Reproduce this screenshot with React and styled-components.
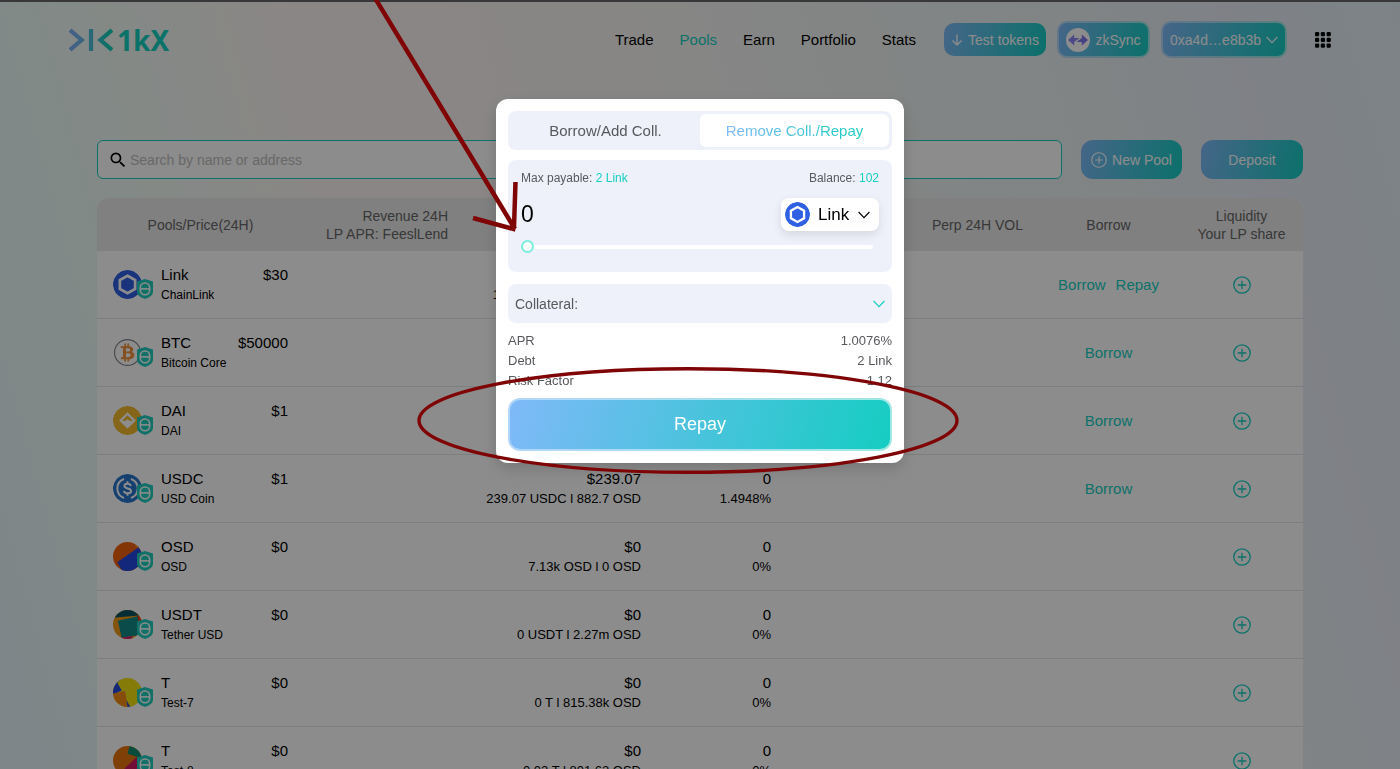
import React, { useState } from 'react';
import styled, { createGlobalStyle, css } from 'styled-components';
import { MdSearch } from 'react-icons/md';
import { FaBtc } from 'react-icons/fa';

const teal = '#15cfc2';
const brand = '#7fb9f8, #15cdc2';
const brandPale = '#b3d6fb, #9fe9e3';

const GlobalStyle = createGlobalStyle`
  *, *::before, *::after { box-sizing: border-box; }
  body {
    margin: 0;
    overflow: hidden;
    font-family: 'Liberation Sans', Arial, Helvetica, sans-serif;
    font-size: 14px;
    color: #000;
  }
  button, input, select { font: inherit; color: inherit; }
  button { border: 0; padding: 0; background: none; cursor: pointer; }
  a { color: inherit; text-decoration: none; }
`;

const Page = styled.div`
  min-height: 100vh;
  border-top: 2px solid #66666c;
  background: linear-gradient(
    75deg,
    #e6f3f9 0%,
    #ebfbf6 14%,
    #fbf5f2 31%,
    #f7f5f3 50%,
    #eef2f2 66%,
    #eaf1f1 78%,
    #e7ecf5 89%,
    #e2eef5 100%
  );
`;

const Header = styled.header`
  display: flex;
  align-items: center;
  justify-content: space-between;
  height: 75px;
  padding: 0 69px;
`;

const Logo = styled.a`
  display: flex;
  align-items: center;
  gap: 4px;
  font-family: 'Noto Sans', sans-serif;
  font-size: 28px;
  font-weight: 700;
  line-height: 28px;
  color: ${teal};
`;

const HeaderSide = styled.div`
  display: flex;
  align-items: center;
  gap: 28px;
`;

const Nav = styled.nav`
  display: flex;
  gap: 26px;
  font-size: 15px;
  line-height: 20px;
`;

const NavLink = styled.a`
  color: ${(p) => (p.$active ? teal : '#000')};
`;

const HeaderActions = styled.div`
  display: flex;
  align-items: center;
  gap: 11px;
`;

const GradientButton = styled.button`
  display: inline-flex;
  align-items: center;
  justify-content: center;
  gap: 5px;
  width: ${(p) => p.$width};
  height: ${(p) => p.$height};
  border-radius: ${(p) => p.$radius || '10px'};
  background: linear-gradient(105deg, ${brand});
  color: #fff;
  font-size: ${(p) => p.$size || '14px'};
  white-space: nowrap;
  ${(p) =>
    p.$ring &&
    css`
      border: 2px solid transparent;
      background: linear-gradient(105deg, ${brand}) padding-box,
        linear-gradient(105deg, ${brandPale}) border-box;
    `}
`;

const AppsButton = styled.button`
  display: flex;
`;

const Main = styled.main`
  padding: 63px 97px 0;
`;

const Toolbar = styled.div`
  display: flex;
  gap: 19px;
`;

const SearchBox = styled.label`
  flex: 1;
  display: flex;
  align-items: center;
  height: 39px;
  padding: 0 10px;
  border: 1px solid ${teal};
  border-radius: 6px;
  background: #fff;
`;

const SearchInput = styled.input`
  flex: 1;
  border: 0;
  outline: 0;
  background: none;
  &::placeholder { color: #bdbdbd; opacity: 1; }
`;

const PoolTable = styled.table`
  width: 100%;
  margin-top: 19px;
  table-layout: fixed;
  border-collapse: separate;
  border-spacing: 0;
  border-radius: 12px 12px 0 0;
  overflow: hidden;
  background: #fff;
`;

const HeadCell = styled.th`
  height: 53px;
  padding: 0 14px;
  background: #e9e9e9;
  color: #666;
  font-weight: 400;
  line-height: 18px;
  white-space: nowrap;
  text-align: ${(p) => p.$align || 'center'};
  &:nth-child(2) { padding-right: 16px; }
`;

const Cell = styled.td`
  height: 68px;
  padding: 0 16px;
  border-bottom: 1px solid #e6e6ea;
  text-align: ${(p) => p.$align || 'center'};
`;

const PoolInfo = styled.div`
  display: flex;
  align-items: center;
  gap: 8px;
`;

const TokenMark = styled.span`
  position: relative;
  display: flex;
  width: 40px;
`;

const ShieldBadge = styled.svg`
  position: absolute;
  right: 0;
  bottom: 0;
`;

const PoolName = styled.div`
  flex: 1;
  text-align: left;
`;

const Primary = styled.div`
  font-size: 15px;
  line-height: 20px;
`;

const Secondary = styled.div`
  min-height: 20px;
  font-size: ${(p) => (p.$small ? '12px' : '13px')};
  line-height: 20px;
  white-space: nowrap;
`;

const Price = styled(Primary)`
  align-self: flex-start;
`;

const CellActions = styled.div`
  display: flex;
  justify-content: center;
  gap: 10px;
`;

const TextButton = styled.button`
  color: ${teal};
  font-size: 15px;
  line-height: 20px;
`;

const AddButton = styled.button`
  display: inline-flex;
  vertical-align: middle;
  color: ${teal};
`;

const Mask = styled.div`
  position: fixed;
  inset: 0;
  display: flex;
  justify-content: center;
  align-items: flex-start;
  padding-top: 99px;
  background: rgba(0, 0, 0, 0.45);
`;

const Modal = styled.section`
  width: 408px;
  padding: 12px;
  border-radius: 12px;
  background: #fff;
  color: #58595d;
  box-shadow: 0 6px 16px rgba(0, 0, 0, 0.16);
`;

const Tabs = styled.div`
  display: flex;
  height: 39px;
  padding: 3px;
  border-radius: 8px;
  background: #eff1fa;
`;

const Tab = styled.button`
  flex: 1;
  border-radius: 6px;
  font-size: 15px;
  background: ${(p) => (p.$selected ? '#fff' : 'none')};
`;

const TabLabel = styled.span`
  ${(p) =>
    p.$selected &&
    css`
      background: linear-gradient(90deg, ${brand});
      background-clip: text;
      color: transparent;
    `}
`;

const AmountPanel = styled.div`
  margin-top: 10px;
  padding: 10px 13px 19px;
  border-radius: 8px;
  background: #eff1fa;
`;

const Between = styled.div`
  display: flex;
  align-items: center;
  justify-content: space-between;
`;

const Limits = styled(Between)`
  font-size: 12px;
  line-height: 16px;
`;

const Accent = styled.span`
  color: ${teal};
`;

const AmountRow = styled(Between)`
  margin-top: 12px;
  color: #000;
`;

const AmountInput = styled.input`
  width: 160px;
  padding: 0;
  border: 0;
  outline: 0;
  background: none;
  font-size: 23px;
`;

const TokenPicker = styled.label`
  display: flex;
  align-items: center;
  gap: 8px;
  height: 33px;
  padding: 0 9px 0 4px;
  border-radius: 8px;
  background: #fff;
  box-shadow: 0 4px 10px rgba(0, 0, 0, 0.1);
`;

const TokenSelect = styled.select`
  appearance: none;
  padding: 0;
  border: 0;
  outline: 0;
  background: none;
  font-size: 17px;
`;

const Slider = styled.input`
  display: block;
  appearance: none;
  width: calc(100% - 6px);
  height: 13px;
  margin: 9px 0 0;
  background: none;
  &::-webkit-slider-runnable-track {
    height: 4px;
    border-radius: 2px;
    background: #fff;
  }
  &::-webkit-slider-thumb {
    appearance: none;
    width: 13px;
    height: 13px;
    margin-top: -5px;
    border: 2px solid #79eedd;
    border-radius: 50%;
    background: #fff;
  }
`;

const CollateralButton = styled.button`
  display: flex;
  align-items: center;
  justify-content: space-between;
  width: 100%;
  height: 39px;
  margin-top: 12px;
  padding: 0 7px;
  border-radius: 8px;
  background: #eff1fa;
`;

const Summary = styled.dl`
  margin: 8px 0 7px;
  font-size: 13px;
  line-height: 20px;
`;

const SummaryValue = styled.dd`
  margin: 0;
`;

const Annotations = styled.svg`
  position: fixed;
  top: 0;
  left: calc(50% - 700px);
  pointer-events: none;
`;

const Chevron = ({ color = 'currentColor' }) => (
  <svg width="12" height="12" viewBox="0 0 12 12" fill="none" stroke={color} strokeWidth="1.2" aria-hidden="true">
    <path d="M.6 3 6 8.6 11.4 3" />
  </svg>
);

const PlusCircle = ({ size }) => (
  <svg width={size} height={size} viewBox="0 0 18 18" fill="none" stroke="currentColor" strokeWidth="1.3" aria-hidden="true">
    <circle cx="9" cy="9" r="8.2" />
    <path d="M9 4.7v8.6M4.7 9h8.6" />
  </svg>
);

const ArrowDown = () => (
  <svg width="12" height="14" viewBox="0 0 12 14" fill="none" stroke="currentColor" strokeWidth="1.3" aria-hidden="true">
    <path d="M6 1.5v10.5M1.5 7.5 6 12l4.5-4.5" />
  </svg>
);

const LogoMark = () => (
  <svg width="44" height="24" viewBox="0 0 44 24" fill="none" stroke="url(#logo-fill)" strokeWidth="4.2" aria-hidden="true">
    <defs>
      <linearGradient id="logo-fill" gradientUnits="userSpaceOnUse" x1="0" y1="0" x2="44" y2="0">
        <stop offset="0.1" stopColor="#7fb0f5" />
        <stop offset="0.9" stopColor="#15cdb8" />
      </linearGradient>
    </defs>
    <path d="M1 2 12.6 12 1 22M43 2 31.4 12 43 22" />
    <path d="M19.9 1h4.2v22h-4.2z" fill="url(#logo-fill)" stroke="none" />
  </svg>
);

const ZkSyncMark = () => (
  <svg width="24" height="24" viewBox="0 0 24 24" aria-hidden="true">
    <circle cx="12" cy="12" r="12" fill="#fff" />
    <path d="M2 12 8.2 6.4V10h5.3L8.2 13.9v3.6z" fill="#8a86f0" />
    <path d="M22 12 15.8 6.4V10L10.5 14h5.3v3.5z" fill="#8078ec" />
  </svg>
);

const AppsIcon = () => (
  <svg width="16" height="16" viewBox="0 0 16 16" aria-hidden="true">
    {[0, 5.8, 11.6].map((y) =>
      [0, 5.8, 11.6].map((x) => <rect key={`${x}-${y}`} x={x} y={y} width="4.2" height="4.2" rx="1.2" />)
    )}
  </svg>
);

const tokenArt = {
  link: (
    <>
      <circle cx="15" cy="15" r="15" fill="#2f5fe3" />
      <path d="M15 6 22.900 10.500v9L15 24 7.100 19.500v-9z" fill="none" stroke="#fff" strokeWidth="2.800" />
    </>
  ),
  btc: (
    <>
      <circle cx="15" cy="15" r="13.4" fill="#fff" stroke="#85858d" strokeWidth="1.2" />
      <FaBtc x="5.5" y="5.5" size={19} color="#f0903c" />
    </>
  ),
  dai: (
    <>
      <circle cx="15" cy="15" r="15" fill="#f2b92b" />
      <path fillRule="evenodd" d="M15 6.500 23.700 15 15 23.600 6.300 15zM15 9.500 9.300 15.200H13L15 13.600 17 15.200h3.700z" fill="#fff" />
    </>
  ),
  usdc: (
    <>
      <circle cx="15" cy="15" r="15" fill="#2775ca" />
      <path
        d="M11.4 5.2a10.4 10.4 0 0 0 0 19.6M18.6 5.2a10.4 10.4 0 0 1 0 19.6M18.5 12.4c-.4-1.6-1.6-2.3-3.4-2.3-2 0-3.3.9-3.3 2.4 0 3.5 6.9 1.5 6.9 5 0 1.6-1.5 2.5-3.6 2.5-2.1 0-3.5-.8-3.8-2.5M15 7.6V10m0 10v2.5"
        fill="none"
        stroke="#fff"
        strokeWidth="2"
      />
    </>
  ),
  osd: (
    <>
      <rect width="30" height="30" fill="#f0620c" />
      <path d="M4.5 21 26.5 5.5 36 20 24 34H12z" fill="#2347e0" />
      <path d="M22 3 27 5l-1.5 1z" fill="#f6a31e" />
    </>
  ),
  usdt: (
    <>
      <rect width="30" height="30" fill="#f39a16" />
      <path d="M0 0h30v5.5L0 8z" fill="#0e5464" />
      <path d="M24 6h6v12h-6z" fill="#f5390c" />
      <path d="M5 11 26 6.5V26l-17 3z" fill="#128a86" />
      <path d="M9 28.5 20 27v3H9z" fill="#d8246c" />
    </>
  ),
  t7: (
    <>
      <rect width="30" height="30" fill="#f1e012" />
      <path d="M0 0h9L4.5 5 9 13 0 17z" fill="#2347e0" />
      <path d="M0 16 12.5 13.5 15.5 31H0z" fill="#f28c12" />
      <path d="M14 23 18 30h-3z" fill="#2347e0" />
    </>
  ),
  t8: (
    <>
      <rect width="30" height="30" fill="#e8760e" />
      <path d="M17 0 30 4v9L15 8z" fill="#128a70" />
      <path d="M12 23 24 12 30 13v17H12z" fill="#d01a62" />
      <path d="M10 24h20v6H10z" fill="#24407c" />
    </>
  ),
};

const TokenIcon = ({ id, size = 29 }) => (
  <svg width={size} height={size} viewBox="0 0 30 30" aria-hidden="true">
    <defs>
      <clipPath id={`round-${id}-${size}`}>
        <circle cx="15" cy="15" r="15" />
      </clipPath>
    </defs>
    <g clipPath={`url(#round-${id}-${size})`}>{tokenArt[id]}</g>
  </svg>
);

const Shield = () => (
  <ShieldBadge width="16" height="20" viewBox="0 0 16 20" aria-hidden="true">
    <path d="M8 0 16 2.5V12.500C16 16 12.800 18.400 8 20 3.200 18.400 0 16 0 12.500V2.500z" fill="#1fcdbd" />
    <rect x="3.300" y="4" width="9.400" height="11.800" rx="4.700" fill="none" stroke="#fff" strokeWidth="1.600" />
    <path d="M3.500 9.900h9" stroke="#fff" strokeWidth="1.600" />
  </ShieldBadge>
);

const pools = [
  { id: 'link', symbol: 'Link', name: 'ChainLink', price: '$30', tvl: '', split: '102.45 Link l 30.38k OSD', vol: '', rate: '', actions: ['Borrow', 'Repay'] },
  { id: 'btc', symbol: 'BTC', name: 'Bitcoin Core', price: '$50000', tvl: '', split: '', vol: '', rate: '', actions: ['Borrow'] },
  { id: 'dai', symbol: 'DAI', name: 'DAI', price: '$1', tvl: '', split: '', vol: '', rate: '', actions: ['Borrow'] },
  { id: 'usdc', symbol: 'USDC', name: 'USD Coin', price: '$1', tvl: '$239.07', split: '239.07 USDC l 882.7 OSD', vol: '0', rate: '1.4948%', actions: ['Borrow'] },
  { id: 'osd', symbol: 'OSD', name: 'OSD', price: '$0', tvl: '$0', split: '7.13k OSD l 0 OSD', vol: '0', rate: '0%', actions: [] },
  { id: 'usdt', symbol: 'USDT', name: 'Tether USD', price: '$0', tvl: '$0', split: '0 USDT l 2.27m OSD', vol: '0', rate: '0%', actions: [] },
  { id: 't7', symbol: 'T', name: 'Test-7', price: '$0', tvl: '$0', split: '0 T l 815.38k OSD', vol: '0', rate: '0%', actions: [] },
  { id: 't8', symbol: 'T', name: 'Test-8', price: '$0', tvl: '$0', split: '0.02 T l 801.62 OSD', vol: '0', rate: '0%', actions: [] },
];

const columnWidths = [207, 160, 193, 130, 131, 119, 143, 123];

const PoolRow = ({ pool }) => (
  <tr>
    <Cell>
      <PoolInfo>
        <TokenMark>
          <TokenIcon id={pool.id} />
          <Shield />
        </TokenMark>
        <PoolName>
          <Primary>{pool.symbol}</Primary>
          <Secondary $small>{pool.name}</Secondary>
        </PoolName>
        <Price>{pool.price}</Price>
      </PoolInfo>
    </Cell>
    <Cell />
    <Cell $align="right">
      <Primary>{pool.tvl || '\u00a0'}</Primary>
      <Secondary>{pool.split}</Secondary>
    </Cell>
    <Cell $align="right">
      <Primary>{pool.vol || '\u00a0'}</Primary>
      <Secondary>{pool.rate}</Secondary>
    </Cell>
    <Cell />
    <Cell />
    <Cell>
      <CellActions>
        {pool.actions.map((action) => (
          <TextButton key={action} type="button">{action}</TextButton>
        ))}
      </CellActions>
    </Cell>
    <Cell>
      <AddButton type="button" aria-label={`Add liquidity to ${pool.symbol}`}>
        <PlusCircle size={18} />
      </AddButton>
    </Cell>
  </tr>
);

const RepayModal = () => {
  const [amount, setAmount] = useState('0');
  const update = (e) => setAmount(e.target.value);
  return (
    <Mask>
      <Modal role="dialog" aria-modal="true" aria-label="Repay">
        <Tabs role="tablist">
          <Tab type="button" role="tab" aria-selected="false">
            <TabLabel>Borrow/Add Coll.</TabLabel>
          </Tab>
          <Tab type="button" role="tab" aria-selected="true" $selected>
            <TabLabel $selected>Remove Coll./Repay</TabLabel>
          </Tab>
        </Tabs>
        <AmountPanel>
          <Limits>
            <span>Max payable: <Accent>2 Link</Accent></span>
            <span>Balance: <Accent>102</Accent></span>
          </Limits>
          <AmountRow>
            <AmountInput aria-label="Amount" value={amount} onChange={update} />
            <TokenPicker>
              <TokenIcon id="link" size={25} />
              <TokenSelect aria-label="Token" defaultValue="Link">
                <option>Link</option>
              </TokenSelect>
              <Chevron />
            </TokenPicker>
          </AmountRow>
          <Slider type="range" aria-label="Amount slider" min="0" max="2" step="0.01" value={Number(amount) || 0} onChange={update} />
        </AmountPanel>
        <CollateralButton type="button">
          Collateral:
          <Chevron color={teal} />
        </CollateralButton>
        <Summary>
          <Between><dt>APR</dt><SummaryValue>1.0076%</SummaryValue></Between>
          <Between><dt>Debt</dt><SummaryValue>2 Link</SummaryValue></Between>
          <Between><dt>Risk Factor</dt><SummaryValue>1.12</SummaryValue></Between>
        </Summary>
        <GradientButton type="button" $ring $width="100%" $height="53px" $radius="12px" $size="18px">
          Repay
        </GradientButton>
      </Modal>
    </Mask>
  );
};

export default function App() {
  return (
    <>
      <GlobalStyle />
      <Page>
        <Header>
          <Logo href="#">
            <LogoMark />
            1kX
          </Logo>
          <HeaderSide>
            <Nav>
              {['Trade', 'Pools', 'Earn', 'Portfolio', 'Stats'].map((item) => (
                <NavLink key={item} href="#" $active={item === 'Pools'}>{item}</NavLink>
              ))}
            </Nav>
            <HeaderActions>
              <GradientButton type="button" $width="102px" $height="33px">
                <ArrowDown />
                Test tokens
              </GradientButton>
              <GradientButton type="button" $ring $width="93px" $height="37px">
                <ZkSyncMark />
                zkSync
              </GradientButton>
              <GradientButton type="button" $ring $width="126px" $height="37px">
                0xa4d…e8b3b
                <Chevron />
              </GradientButton>
            </HeaderActions>
            <AppsButton type="button" aria-label="Apps">
              <AppsIcon />
            </AppsButton>
          </HeaderSide>
        </Header>
        <Main>
          <Toolbar>
            <SearchBox>
              <MdSearch size={20} />
              <SearchInput type="text" aria-label="Search pools" placeholder="Search by name or address" />
            </SearchBox>
            <GradientButton type="button" $width="101px" $height="39px" $radius="12px">
              <PlusCircle size={16} />
              New Pool
            </GradientButton>
            <GradientButton type="button" $width="102px" $height="39px" $radius="12px">
              Deposit
            </GradientButton>
          </Toolbar>
          <PoolTable>
            <colgroup>
              {columnWidths.map((width, i) => <col key={i} width={width} />)}
            </colgroup>
            <thead>
              <tr>
                <HeadCell>Pools/Price(24H)</HeadCell>
                <HeadCell $align="right">Revenue 24H<br />LP APR: FeeslLend</HeadCell>
                <HeadCell />
                <HeadCell />
                <HeadCell />
                <HeadCell>Perp 24H VOL</HeadCell>
                <HeadCell>Borrow</HeadCell>
                <HeadCell>Liquidity<br />Your LP share</HeadCell>
              </tr>
            </thead>
            <tbody>
              {pools.map((pool) => <PoolRow key={pool.id} pool={pool} />)}
            </tbody>
          </PoolTable>
        </Main>
      </Page>
      <RepayModal />
      <Annotations width="1400" height="480" viewBox="0 0 1400 480" fill="none" stroke="#7f0406" aria-hidden="true">
        <path d="M375 -2 515 229M473 218 515.5 229.5M515.5 182 514 227" strokeWidth="4.5" />
        <ellipse cx="688" cy="420.5" rx="269" ry="51.8" strokeWidth="3.4" />
      </Annotations>
    </>
  );
}
